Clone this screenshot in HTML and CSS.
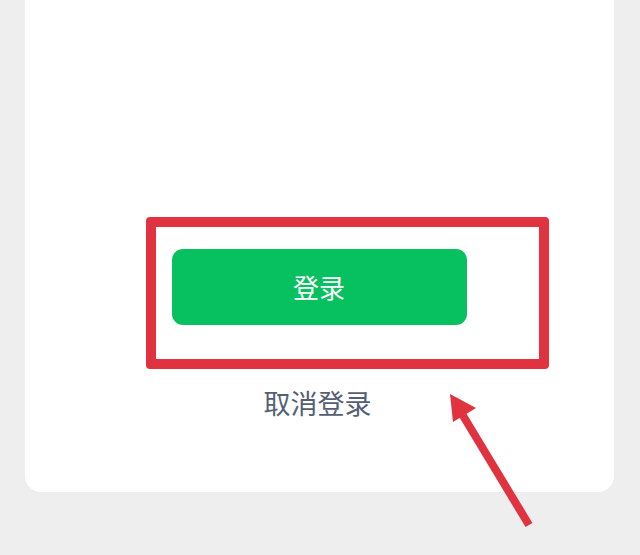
FILE: index.html
```html
<!DOCTYPE html>
<html lang="zh-CN">
<head>
<meta charset="utf-8">
<title>登录</title>
<link rel="stylesheet" href="styles.css">
</head>
<body>
<div class="page">
  <div class="card">
    <button class="login-btn" type="button">登录</button>
    <a class="cancel-link" href="#">取消登录</a>
    <div class="highlight-box"></div>
  </div>
  <svg class="arrow" width="640" height="555" viewBox="0 0 640 555" aria-hidden="true">
    <line x1="529" y1="525" x2="459" y2="409" stroke="#e0323f" stroke-width="8" stroke-linecap="butt"/>
    <polygon points="450,394 476,408 453,422" fill="#e0323f"/>
  </svg>
</div>
</body>
</html>
```

FILE: styles.css
```css
html, body {
  margin: 0;
  padding: 0;
  background: #eeeeee;
  font-family: "Noto Sans CJK SC", "Noto Sans", sans-serif;
}

.page {
  position: relative;
  width: 640px;
  height: 555px;
  overflow: hidden;
  padding: 0 26px 0 25px;
  box-sizing: border-box;
}

.card {
  position: relative;
  height: 492px;
  background: #ffffff;
  border-radius: 0 0 16px 16px;
  display: flex;
  flex-direction: column;
  align-items: center;
  padding-top: 249px;
  box-sizing: border-box;
}

.login-btn {
  width: 295px;
  height: 76px;
  border: none;
  border-radius: 11px;
  background: #07c160;
  color: #ffffff;
  font-family: inherit;
  font-size: 26px;
  line-height: 34px;
  padding: 0;
  margin-left: -1px;
}

.cancel-link {
  margin-top: 61px;
  font-size: 27px;
  line-height: 34px;
  color: #555e74;
  text-decoration: none;
  margin-left: -4px;
}

.highlight-box {
  position: absolute;
  left: 121px;
  top: 217px;
  width: 403px;
  height: 152px;
  border: 10px solid #e0323f;
  border-radius: 4px;
  box-sizing: border-box;
}

.arrow {
  position: absolute;
  left: 0;
  top: 0;
}
```
